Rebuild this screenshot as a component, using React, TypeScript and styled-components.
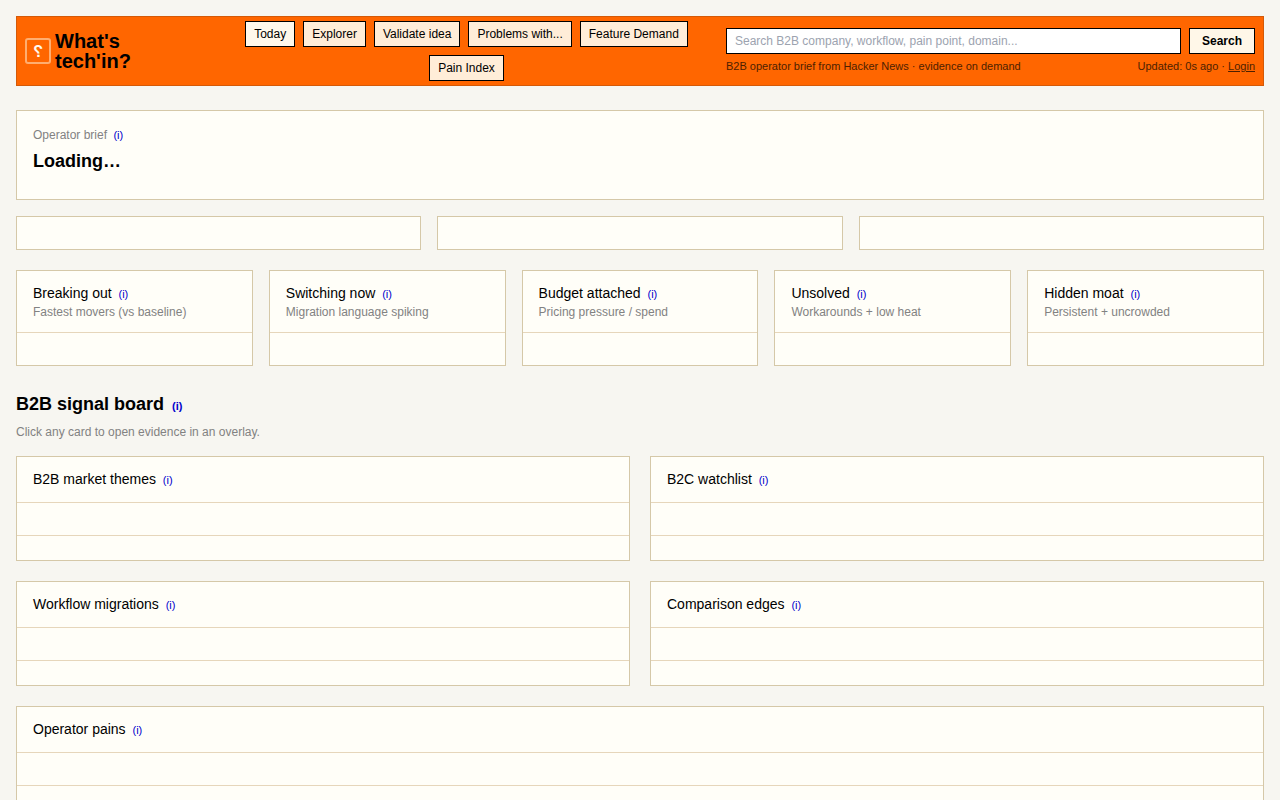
import React from "react";
import styled, { createGlobalStyle } from "styled-components";

const GlobalStyle = createGlobalStyle`
  *, *::before, *::after { box-sizing: border-box; }
  html, body { margin: 0; height: 100%; overflow: hidden; }
  body {
    background: #f7f6f1;
    color: #000;
    font-family: "Liberation Sans", Arial, sans-serif;
    font-size: 14px;
    line-height: 21px;
  }
`;

const Page = styled.div`
  height: 800px;
  overflow: hidden;
  padding: 16px;
  background: #f7f6f1;
`;

const Header = styled.header`
  display: flex;
  align-items: center;
  height: 70px;
  padding: 0 8px;
  background: #ff6600;
  border: 1px solid #d45a08;
`;

const Brand = styled.div`
  display: flex;
  align-items: center;
  gap: 4px;
  width: 181px;
  flex: none;
`;

const Logo = styled.span`
  display: flex;
  align-items: center;
  justify-content: center;
  width: 26px;
  height: 26px;
  padding-top: 2px;
  border: 2px solid rgba(255, 240, 215, 0.52);
  border-radius: 3px;
  color: #fffaf0;
  font-size: 16px;
  line-height: 22px;
  font-weight: 700;
  transform: scaleX(-1);
`;

const BrandName = styled.div`
  width: 100px;
  font-size: 20px;
  line-height: 20px;
  font-weight: 700;
`;

const Nav = styled.nav`
  display: flex;
  flex-wrap: wrap;
  justify-content: center;
  gap: 8px;
  width: 520px;
  padding-left: 1px;
  flex: none;
`;

const NavLink = styled.a<{ $active?: boolean }>`
  height: 26px;
  padding: 0 8px;
  border: 1px solid #000;
  background: ${(p) => (p.$active ? "#fff8eb" : "#ffedd8")};
  font-size: 12px;
  line-height: 24px;
  white-space: nowrap;
`;

const SearchArea = styled.div`
  flex: 1;
  min-width: 0;
`;

const SearchForm = styled.form`
  display: flex;
  gap: 8px;
  margin-bottom: 4px;
`;

const SearchInput = styled.input`
  flex: 1;
  min-width: 0;
  height: 26px;
  padding: 0 8px;
  border: 1px solid #000;
  border-radius: 0;
  background: #fff;
  font: 12px "Liberation Sans", Arial, sans-serif;
  &::placeholder { color: #9ca3af; opacity: 1; }
`;

const SearchButton = styled.button`
  width: 66px;
  height: 26px;
  padding: 0;
  border: 1px solid #000;
  background: #fff7e8;
  color: #000;
  font: bold 12px "Liberation Sans", Arial, sans-serif;
`;

const Meta = styled.div`
  display: flex;
  justify-content: space-between;
  font-size: 11px;
  line-height: 16px;
  color: #4d1f00;
`;

const Underlined = styled.a`
  text-decoration: underline;
`;

const Card = styled.section`
  background: #fffef8;
  border: 1px solid #d5c8a8;
`;

const Brief = styled(Card)`
  height: 90px;
  margin-top: 24px;
  padding: 16px;
`;

const Muted = styled.div`
  font-size: 12px;
  line-height: 16px;
  color: #828282;
`;

const BriefTitle = styled.h1`
  margin: 5px 0 0;
  font-size: 18px;
  line-height: 27px;
`;

const InfoMark = styled.span`
  margin-left: 3px;
  font-size: 11px;
  line-height: 1;
  color: #0000cc;
`;

const Grid = styled.div<{ $columns: number; $gap: number; $top: number }>`
  display: grid;
  grid-template-columns: repeat(${(p) => p.$columns}, minmax(0, 1fr));
  gap: ${(p) => p.$gap}px;
  margin-top: ${(p) => p.$top}px;
`;

const Blank = styled(Card)`
  height: 34px;
`;

const CardHead = styled.div`
  padding: 12px 16px;
`;

const CardTitle = styled.div`
  height: 21px;
  font-size: 14px;
  line-height: 21px;
`;

const CardRow = styled.div<{ $height: number }>`
  height: ${(p) => p.$height}px;
  border-top: 1px solid #e6d6bb;
`;

const BoardTitle = styled.h2`
  margin: 25px 0 0;
  height: 27px;
  font-size: 18px;
  line-height: 27px;
`;

const BoardNote = styled(Muted)`
  margin-top: 6px;
`;

const Wide = styled.div`
  grid-column: 1 / -1;
`;

const links = ["Today", "Explorer", "Validate idea", "Problems with...", "Feature Demand", "Pain Index"];

const signals = [
  ["Breaking out", "Fastest movers (vs baseline)"],
  ["Switching now", "Migration language spiking"],
  ["Budget attached", "Pricing pressure / spend"],
  ["Unsolved", "Workarounds + low heat"],
  ["Hidden moat", "Persistent + uncrowded"],
];

const boards = ["B2B market themes", "B2C watchlist", "Workflow migrations", "Comparison edges"];

function BoardCard({ title }: { title: string }) {
  return (
    <Card>
      <CardHead>
        <CardTitle>{title} <InfoMark>(i)</InfoMark></CardTitle>
      </CardHead>
      <CardRow $height={33} />
      <CardRow $height={25} />
    </Card>
  );
}

export default function App() {
  return (
    <Page>
      <GlobalStyle />
      <Header>
        <Brand>
          <Logo>?</Logo>
          <BrandName>What's<br />tech'in?</BrandName>
        </Brand>
        <Nav>
          {links.map((label, i) => (
            <NavLink key={label} $active={i === 0}>{label}</NavLink>
          ))}
        </Nav>
        <SearchArea>
          <SearchForm>
            <SearchInput placeholder="Search B2B company, workflow, pain point, domain..." />
            <SearchButton type="button">Search</SearchButton>
          </SearchForm>
          <Meta>
            <span>B2B operator brief from Hacker News · evidence on demand</span>
            <span>Updated: 0s ago · <Underlined>Login</Underlined></span>
          </Meta>
        </SearchArea>
      </Header>
      <Brief>
        <Muted>Operator brief <InfoMark>(i)</InfoMark></Muted>
        <BriefTitle>Loading…</BriefTitle>
      </Brief>
      <Grid $columns={3} $gap={16} $top={16}>
        <Blank /><Blank /><Blank />
      </Grid>
      <Grid $columns={5} $gap={16} $top={20}>
        {signals.map(([title, note]) => (
          <Card key={title}>
            <CardHead>
              <CardTitle>{title} <InfoMark>(i)</InfoMark></CardTitle>
              <Muted>{note}</Muted>
            </CardHead>
            <CardRow $height={33} />
          </Card>
        ))}
      </Grid>
      <BoardTitle>B2B signal board <InfoMark>(i)</InfoMark></BoardTitle>
      <BoardNote>Click any card to open evidence in an overlay.</BoardNote>
      <Grid $columns={2} $gap={20} $top={16}>
        {boards.map((title) => <BoardCard key={title} title={title} />)}
        <Wide><BoardCard title="Operator pains" /></Wide>
      </Grid>
    </Page>
  );
}
